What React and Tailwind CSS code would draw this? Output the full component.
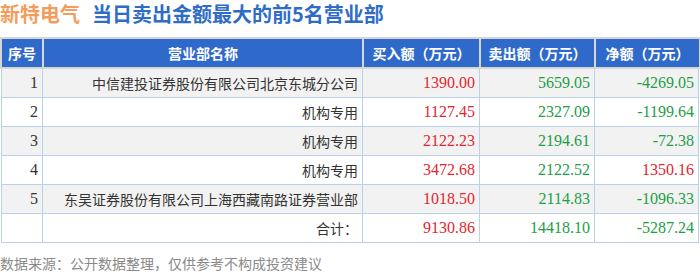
import React from "react";

const rows = [
  ["1", "中信建投证券股份有限公司北京东城分公司", "1390.00", "5659.05", "-4269.05"],
  ["2", "机构专用", "1127.45", "2327.09", "-1199.64"],
  ["3", "机构专用", "2122.23", "2194.61", "-72.38"],
  ["4", "机构专用", "3472.68", "2122.52", "1350.16"],
  ["5", "东吴证券股份有限公司上海西藏南路证券营业部", "1018.50", "2114.83", "-1096.33"],
];

const sans = { fontFamily: '"Noto Sans CJK SC", "Noto Sans", sans-serif' };

export default function App() {
  return (
    <div className="relative w-[700px] h-[274px] bg-white overflow-hidden" style={sans}>
      <div className="relative h-[28px] flex items-center text-[20px] font-bold leading-none">
        <span className="text-[#f39d5c]">新特电气</span>
        <span className="ml-[12px] text-[#2f6cc7]">当日卖出金额最大的前5名营业部</span>
      </div>

      <div className="relative mt-[9px]">
        <div className="flex gap-[2px] bg-[#d6d6d6] p-[2px] pr-[1px] h-[32px] text-white text-[14px] font-bold">
          <div className="w-[40px] bg-[#2f6acb] flex items-center justify-center">序号</div>
          <div className="w-[318px] bg-[#2f6acb] flex items-center justify-center">营业部名称</div>
          <div className="w-[115px] bg-[#2f6acb] flex items-center justify-center">买入额（万元）</div>
          <div className="w-[113px] bg-[#2f6acb] flex items-center justify-center">卖出额（万元）</div>
          <div className="flex-1 bg-[#2f6acb] flex items-center justify-center">净额（万元）</div>
        </div>
        <div className="border-l border-r border-[#b9d1ea] mx-[1px]">
          {rows.map((r, i) => (
            <Row key={i} r={r} bg={i % 2 === 0 ? "bg-[#f2f2f2]" : "bg-white"} />
          ))}
          <Row r={["", "合计：", "9130.86", "14418.10", "-5287.24"]} bg="bg-white" />
        </div>
      </div>

      <div className="relative mt-[13px] text-[14px] text-[#8a8a8a] leading-none">
        数据来源：公开数据整理，仅供参考不构成投资建议
      </div>
    </div>
  );
}

function Row({ r, bg }) {
  const serif = { fontFamily: '"Liberation Serif", serif' };
  const net = parseFloat(r[4]);
  return (
    <div className={`flex h-[29px] border-b border-[#b9d1ea] ${bg}`}>
      <div className="w-[41px] border-r border-[#b9d1ea] flex items-center justify-end pr-[4px] text-[16px] text-[#333]" style={serif}>{r[0]}</div>
      <div className="w-[320px] border-r border-[#b9d1ea] flex items-center justify-end pr-[4px] text-[14px] text-[#333]">{r[1]}</div>
      <div className="w-[117px] border-r border-[#b9d1ea] flex items-center justify-end pr-[4px] text-[16px] text-[#e3262f]" style={serif}>{r[2]}</div>
      <div className="w-[115px] border-r border-[#b9d1ea] flex items-center justify-end pr-[4px] text-[16px] text-[#1d9e47]" style={serif}>{r[3]}</div>
      <div className={`flex-1 flex items-center justify-end pr-[4px] text-[16px] ${net < 0 ? "text-[#1d9e47]" : "text-[#e3262f]"}`} style={serif}>{r[4]}</div>
    </div>
  );
}
